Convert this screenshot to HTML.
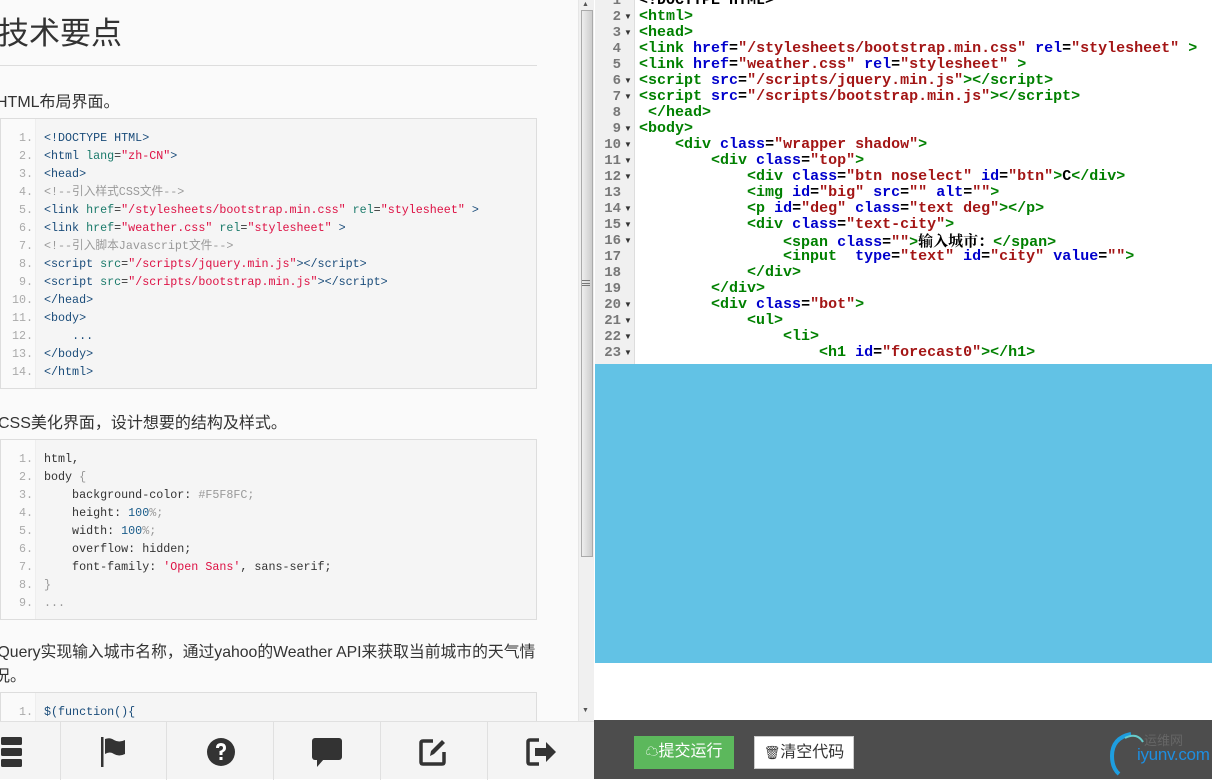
<!DOCTYPE html>
<html><head><meta charset="utf-8">
<style>
*{margin:0;padding:0;box-sizing:border-box}
body{width:1212px;height:779px;overflow:hidden;position:relative;background:#fff;font-family:"Liberation Sans","Noto Sans CJK SC",sans-serif}
#left{position:absolute;left:0;top:0;width:578px;height:721px;background:#fafafa;overflow:hidden}
h1{position:absolute;left:-2px;top:8px;font-size:31px;font-weight:normal;color:#333;white-space:nowrap}
.hr{position:absolute;left:0;top:65px;width:537px;height:1px;background:#ddd}
.p{position:absolute;left:-2px;font-size:16px;color:#333;white-space:nowrap}
.box{position:absolute;left:0;width:537px;border:1px solid #ddd;background:#f5f5f5;font-family:"Liberation Mono","Noto Sans CJK SC",monospace;font-size:11.7px;overflow:hidden}
.box .g{position:absolute;left:0;top:0;bottom:0;width:35px;background:#fafafa;border-right:1px solid #eee}
.box .l{position:absolute;height:18px;line-height:18px;white-space:pre;color:#333}
.box .n{position:absolute;width:32px;text-align:right;color:#aaa;height:18px;line-height:18px}
.t{color:#1a4c7a}.a{color:#1a7a6a}.s{color:#dd1144}.c{color:#999}.k{color:#333}.num{color:#1a5c8a}
#sb{position:absolute;left:578px;top:0;width:16px;height:721px;background:#f0f0f0;border-left:1px solid #e6e6e6}
#thumb{position:absolute;left:581px;top:10px;width:12px;height:547px;background:linear-gradient(90deg,#eee,#ddd 50%,#ccc);border:1px solid #aaa}
#nav{position:absolute;left:0;top:721px;width:594px;height:58px;background:#f4f4f4;border-top:1px solid #e0e0e0}
#nav .sep{position:absolute;top:0;width:1px;height:58px;background:#e0e0e0}
#nav svg{position:absolute}
#right{position:absolute;left:595px;top:0;width:617px;height:364px;background:#fff;overflow:hidden}
#gut{position:absolute;left:0;top:0;width:40px;height:364px;background:#f0f0f0;border-right:1px solid #ddd}
.rl{position:absolute;left:44px;height:16px;line-height:16px;white-space:pre;font-family:"Liberation Mono","Noto Sans CJK SC",monospace;font-weight:bold;font-size:15px}
.rn{position:absolute;left:0;width:26px;text-align:right;font-family:"Liberation Mono",monospace;font-weight:bold;font-size:14px;color:#777;height:16px;line-height:16px}
.fa{position:absolute;left:29px;font-size:8px;color:#333;height:16px;line-height:16px}
.T{color:#008000}.A{color:#0000cc}.V{color:#a31515}.X{color:#000}
#blue{position:absolute;left:595px;top:364px;width:617px;height:299px;background:#62c2e5}
#bar{position:absolute;left:594px;top:720px;width:618px;height:59px;background:#4d4d4d;overflow:hidden}
.btn{position:absolute;top:16px;height:33px;font-size:16px;line-height:31px;white-space:nowrap}
</style></head><body>
<div id="left">
<h1>技术要点</h1>
<div class="hr"></div>
<div class="p" style="top:88px;left:-4px">HTML布局界面。</div>
<div class="box" style="top:118px;height:271px">
<div class="g"></div>
<div class="n" style="top:10px">1.</div><div class="l" style="left:43px;top:10px"><span class="t">&lt;!DOCTYPE HTML&gt;</span></div>
<div class="n" style="top:28px">2.</div><div class="l" style="left:43px;top:28px"><span class="t">&lt;html</span> <span class="a">lang</span>=<span class="s">"zh-CN"</span><span class="t">&gt;</span></div>
<div class="n" style="top:46px">3.</div><div class="l" style="left:43px;top:46px"><span class="t">&lt;head&gt;</span></div>
<div class="n" style="top:64px">4.</div><div class="l" style="left:43px;top:64px"><span class="c">&lt;!--引入样式CSS文件--&gt;</span></div>
<div class="n" style="top:82px">5.</div><div class="l" style="left:43px;top:82px"><span class="t">&lt;link</span> <span class="a">href</span>=<span class="s">"/stylesheets/bootstrap.min.css"</span> <span class="a">rel</span>=<span class="s">"stylesheet"</span> <span class="t">&gt;</span></div>
<div class="n" style="top:100px">6.</div><div class="l" style="left:43px;top:100px"><span class="t">&lt;link</span> <span class="a">href</span>=<span class="s">"weather.css"</span> <span class="a">rel</span>=<span class="s">"stylesheet"</span> <span class="t">&gt;</span></div>
<div class="n" style="top:118px">7.</div><div class="l" style="left:43px;top:118px"><span class="c">&lt;!--引入脚本Javascript文件--&gt;</span></div>
<div class="n" style="top:136px">8.</div><div class="l" style="left:43px;top:136px"><span class="t">&lt;script</span> <span class="a">src</span>=<span class="s">"/scripts/jquery.min.js"</span><span class="t">&gt;&lt;/script&gt;</span></div>
<div class="n" style="top:154px">9.</div><div class="l" style="left:43px;top:154px"><span class="t">&lt;script</span> <span class="a">src</span>=<span class="s">"/scripts/bootstrap.min.js"</span><span class="t">&gt;&lt;/script&gt;</span></div>
<div class="n" style="top:172px">10.</div><div class="l" style="left:43px;top:172px"><span class="t">&lt;/head&gt;</span></div>
<div class="n" style="top:190px">11.</div><div class="l" style="left:43px;top:190px"><span class="t">&lt;body&gt;</span></div>
<div class="n" style="top:208px">12.</div><div class="l" style="left:43px;top:208px">    <span class="t">...</span></div>
<div class="n" style="top:226px">13.</div><div class="l" style="left:43px;top:226px"><span class="t">&lt;/body&gt;</span></div>
<div class="n" style="top:244px">14.</div><div class="l" style="left:43px;top:244px"><span class="t">&lt;/html&gt;</span></div>
</div>
<div class="p" style="top:409px">CSS美化界面，设计想要的结构及样式。</div>
<div class="box" style="top:439px;height:181px">
<div class="g"></div>
<div class="n" style="top:10px">1.</div><div class="l" style="left:43px;top:10px">html,</div>
<div class="n" style="top:28px">2.</div><div class="l" style="left:43px;top:28px">body <span class="c">{</span></div>
<div class="n" style="top:46px">3.</div><div class="l" style="left:43px;top:46px">    background-color: <span class="c">#F5F8FC;</span></div>
<div class="n" style="top:64px">4.</div><div class="l" style="left:43px;top:64px">    height: <span class="num">100</span><span class="c">%;</span></div>
<div class="n" style="top:82px">5.</div><div class="l" style="left:43px;top:82px">    width: <span class="num">100</span><span class="c">%;</span></div>
<div class="n" style="top:100px">6.</div><div class="l" style="left:43px;top:100px">    overflow: hidden;</div>
<div class="n" style="top:118px">7.</div><div class="l" style="left:43px;top:118px">    font-family: <span class="s">'Open Sans'</span>, sans-serif;</div>
<div class="n" style="top:136px">8.</div><div class="l" style="left:43px;top:136px"><span class="c">}</span></div>
<div class="n" style="top:154px">9.</div><div class="l" style="left:43px;top:154px"><span class="c">...</span></div>
</div>
<div class="p" style="top:639px;left:-6px;font-size:15.8px">jQuery实现输入城市名称，通过yahoo的Weather API来获取当前城市的天气情</div>
<div class="p" style="top:662px;left:-6px">况。</div>
<div class="box" style="top:692px;height:60px">
<div class="g"></div>
<div class="n" style="top:10px">1.</div><div class="l" style="left:43px;top:10px"><span class="t">$(function(){</span></div>
</div>
</div>
<div id="sb"></div>
<div id="thumb"></div>
<div style="position:absolute;left:582px;top:280px;width:8px;height:6px;border-top:1px solid #777;border-bottom:1px solid #777"></div>
<div style="position:absolute;left:582px;top:283px;width:8px;height:1px;background:#777"></div>
<div style="position:absolute;left:582px;top:1px;font-size:7px;color:#555">▲</div>
<div style="position:absolute;left:582px;top:707px;font-size:7px;color:#555">▼</div>
<div id="nav">
<div class="sep" style="left:60px"></div><div class="sep" style="left:166px"></div><div class="sep" style="left:273px"></div><div class="sep" style="left:380px"></div><div class="sep" style="left:487px"></div>
<svg style="left:0;top:15px" width="24" height="30"><rect x="1" y="0" width="21" height="8" rx="1.5" fill="#333"/><rect x="1" y="11" width="21" height="8" rx="1.5" fill="#333"/><rect x="1" y="22" width="21" height="8" rx="1.5" fill="#333"/></svg>
<svg style="left:100px;top:15px" width="28" height="30"><rect x="1" y="0" width="2.5" height="30" fill="#333"/><path d="M5 2 Q10 0 14 3 Q19 6 25 3 L25 17 Q19 20 14 17 Q10 14 5 17 Z" fill="#333"/></svg>
<svg style="left:206px;top:15px" width="30" height="30"><circle cx="15" cy="15" r="14" fill="#333"/><path d="M10 11 Q10 6 15 6 Q20 6 20 11 Q20 14 16.5 15.5 L16.5 18 L13.5 18 L13.5 14 Q17 13 17 11 Q17 9 15 9 Q13 9 13 11 Z" fill="#fff"/><rect x="13.5" y="20" width="3" height="3" fill="#fff"/></svg>
<svg style="left:311px;top:16px" width="32" height="30"><rect x="1" y="0" width="30" height="22" rx="3" fill="#333"/><path d="M6 21 L6 29 L13 21 Z" fill="#333"/></svg>
<svg style="left:418px;top:15px" width="30" height="30"><path d="M15 4 L5 4 Q3 4 3 6 L3 25 Q3 27 5 27 L24 27 Q26 27 26 25 L26 15" fill="none" stroke="#333" stroke-width="3.5"/><path d="M12 19 L13 14 L24 3 L27 6 L16 17 Z" fill="#333"/></svg>
<svg style="left:525px;top:15px" width="34" height="30"><path d="M14 3 L5 3 Q3 3 3 5 L3 25 Q3 27 5 27 L14 27" fill="none" stroke="#333" stroke-width="3.5"/><path d="M10 11 L21 11 L21 5 L31 15 L21 25 L21 19 L10 19 Z" fill="#333"/></svg>
</div>

<div id="right">
<div id="gut"></div>
</div>
<div id="blue"></div>
<div id="bar">
<div class="btn" style="left:40px;width:100px;background:#5cb85c;color:#fff;text-align:center"><span style="font-size:13px">☁</span>提交运行</div>
<div class="btn" style="left:160px;width:100px;background:#fff;border:1px solid #ccc;color:#333;text-align:center"><span style="font-size:13px">🗑</span>清空代码</div>
<svg style="position:absolute;left:513px;top:10px" width="40" height="48"><path d="M24 4 Q5 8 5 26 Q5 38 12 44" fill="none" stroke="#1e9ee0" stroke-width="4"/><path d="M18 8 Q30 2 36 12" fill="none" stroke="#6cc" stroke-width="2"/></svg>
<div style="position:absolute;left:550px;top:10px;font-size:13px;color:#666">运维网</div>
<div style="position:absolute;left:543px;top:25px;font-size:17px;color:#1e8ee0;letter-spacing:-0.3px">iyunv.com</div>
</div>

<div id="rc"></div>
<script>
var L=[
[1,0,'<X>&lt;!DOCTYPE HTML&gt;</X>'],
[2,1,'<T>&lt;html&gt;</T>'],
[3,1,'<T>&lt;head&gt;</T>'],
[4,0,'<T>&lt;link</T> <A>href</A>=<V>"/stylesheets/bootstrap.min.css"</V> <A>rel</A>=<V>"stylesheet"</V> <T>&gt;</T>'],
[5,0,'<T>&lt;link</T> <A>href</A>=<V>"weather.css"</V> <A>rel</A>=<V>"stylesheet"</V> <T>&gt;</T>'],
[6,1,'<T>&lt;script</T> <A>src</A>=<V>"/scripts/jquery.min.js"</V><T>&gt;&lt;/script&gt;</T>'],
[7,1,'<T>&lt;script</T> <A>src</A>=<V>"/scripts/bootstrap.min.js"</V><T>&gt;&lt;/script&gt;</T>'],
[8,0,' <T>&lt;/head&gt;</T>'],
[9,1,'<T>&lt;body&gt;</T>'],
[10,1,'    <T>&lt;div</T> <A>class</A>=<V>"wrapper shadow"</V><T>&gt;</T>'],
[11,1,'        <T>&lt;div</T> <A>class</A>=<V>"top"</V><T>&gt;</T>'],
[12,1,'            <T>&lt;div</T> <A>class</A>=<V>"btn noselect"</V> <A>id</A>=<V>"btn"</V><T>&gt;</T><X>C</X><T>&lt;/div&gt;</T>'],
[13,0,'            <T>&lt;img</T> <A>id</A>=<V>"big"</V> <A>src</A>=<V>""</V> <A>alt</A>=<V>""</V><T>&gt;</T>'],
[14,1,'            <T>&lt;p</T> <A>id</A>=<V>"deg"</V> <A>class</A>=<V>"text deg"</V><T>&gt;&lt;/p&gt;</T>'],
[15,1,'            <T>&lt;div</T> <A>class</A>=<V>"text-city"</V><T>&gt;</T>'],
[16,1,'                <T>&lt;span</T> <A>class</A>=<V>""</V><T>&gt;</T><X style="font-family:\'Noto Serif CJK SC\',serif">输入城市：</X><T>&lt;/span&gt;</T>'],
[17,0,'                <T>&lt;input</T>  <A>type</A>=<V>"text"</V> <A>id</A>=<V>"city"</V> <A>value</A>=<V>""</V><T>&gt;</T>'],
[18,0,'            <T>&lt;/div&gt;</T>'],
[19,0,'        <T>&lt;/div&gt;</T>'],
[20,1,'        <T>&lt;div</T> <A>class</A>=<V>"bot"</V><T>&gt;</T>'],
[21,1,'            <T>&lt;ul&gt;</T>'],
[22,1,'                <T>&lt;li&gt;</T>'],
[23,1,'                    <T>&lt;h1</T> <A>id</A>=<V>"forecast0"</V><T>&gt;&lt;/h1&gt;</T>']];
var h='';
L.forEach(function(r){var y=(r[0]-1)*16-7;
var c=r[2].replace(/<(T|A|V|X)( [^>]*)?>/g,'<span class="$1"$2>').replace(/<\/(T|A|V|X)>/g,'</span>');
h+='<div class="rn" style="top:'+y+'px">'+r[0]+'</div>'+(r[1]?'<div class="fa" style="top:'+y+'px">▼</div>':'')+'<div class="rl" style="top:'+y+'px">'+c+'</div>';});
document.getElementById('right').insertAdjacentHTML('beforeend',h);
</script>
</body></html>
